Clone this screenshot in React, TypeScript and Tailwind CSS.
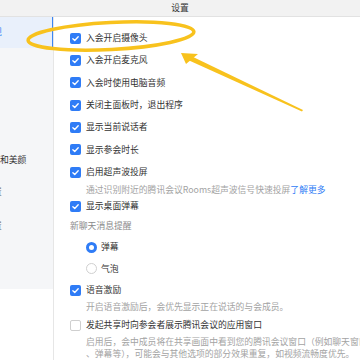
import type { ReactNode } from 'react';

const font = { fontFamily: '"Noto Sans CJK SC", "Noto Sans", sans-serif' };

function Box({ checked }: { checked: boolean }) {
  if (!checked) {
    return (
      <span className="w-[11px] h-[11px] shrink-0 rounded-[2px] border border-[#cfcfcf] bg-white" />
    );
  }
  return (
    <span className="w-[11px] h-[11px] shrink-0 rounded-[2px] bg-[#2f7cf6] flex items-center justify-center">
      <svg width="9" height="9" viewBox="0 0 12 12">
        <polyline
          points="2.5,6.2 5,8.6 9.6,3.6"
          fill="none"
          stroke="white"
          strokeWidth="1.8"
          strokeLinecap="round"
          strokeLinejoin="round"
        />
      </svg>
    </span>
  );
}

function Row({
  label,
  checked = true,
  h,
}: {
  label: string;
  checked?: boolean;
  h: string;
}) {
  return (
    <div className={`flex items-center gap-[5px] ${h}`}>
      <Box checked={checked} />
      <span className="text-[#333] whitespace-nowrap">{label}</span>
    </div>
  );
}

function Desc({ children, h }: { children: ReactNode; h: string }) {
  return (
    <div className={`pl-[16px] flex items-center text-[#a3a3a3] whitespace-nowrap ${h}`}>
      {children}
    </div>
  );
}

function Radio({ label, on, h }: { label: string; on: boolean; h: string }) {
  return (
    <div className={`pl-[16px] flex items-center gap-[4px] ${h}`}>
      {on ? (
        <span className="w-[11px] h-[11px] rounded-full border-[3px] border-[#2f7cf6] bg-white" />
      ) : (
        <span className="w-[11px] h-[11px] rounded-full border border-[#d0d0d0] bg-white" />
      )}
      <span className="text-[#333]">{label}</span>
    </div>
  );
}

export default function App() {
  return (
    <div
      className="relative w-[360px] h-[360px] overflow-hidden bg-white text-[8.8px] leading-none"
      style={font}
    >
      <div className="h-[17px] bg-[#f2f2f2] border-b border-[#e2e2e2] flex items-center justify-center text-[#333]">
        设置
      </div>
      <div className="flex h-[343px]">
        <div className="w-[54px] shrink-0 bg-[#f5f6f8] border-r border-[#e6e6e6] overflow-hidden flex flex-col">
          <div className="h-[31px] bg-[#e9f0fb] border-r-[2px] border-[#3a86f5] -mr-px flex items-center text-[#2f7cf6] whitespace-nowrap">
            <span className="-ml-[7px]">规</span>
          </div>
          <div className="h-[32px]" />
          <div className="h-[32px]" />
          <div className="h-[32px]" />
          <div className="h-[32px] flex items-center text-[#333] whitespace-nowrap">
            <span>和美颜</span>
          </div>
          <div className="h-[32px] flex items-center text-[#777] whitespace-nowrap">
            <span className="-ml-[7px]">置</span>
          </div>
          <div className="h-[36px] flex items-center text-[#777] whitespace-nowrap">
            <span className="-ml-[7px]">置</span>
          </div>
          <div className="h-[45px]" />
          <div className="flex-1 bg-white" />
        </div>
        <div className="flex-1 pl-[16px] pt-[10px] flex flex-col">
          <Row label="入会开启摄像头" h="h-[22.5px]" />
          <Row label="入会开启麦克风" h="h-[22.5px]" />
          <Row label="入会时使用电脑音频" h="h-[22.5px]" />
          <Row label="关闭主面板时，退出程序" h="h-[22.5px]" />
          <Row label="显示当前说话者" h="h-[22.5px]" />
          <Row label="显示参会时长" h="h-[22.5px]" />
          <Row label="启用超声波投屏" h="h-[22.5px]" />
          <Desc h="h-[13.5px]">
            通过识别附近的腾讯会议Rooms超声波信号快速投屏
            <span className="text-[#2f7cf6]">了解更多</span>
          </Desc>
          <Row label="显示桌面弹幕" h="h-[20px]" />
          <div className="h-[20px] flex items-center text-[#8a8a8a]">新聊天消息提醒</div>
          <Radio label="弹幕" on h="h-[21px]" />
          <Radio label="气泡" on={false} h="h-[23px]" />
          <Row label="语音激励" h="h-[20px]" />
          <Desc h="h-[14px]">开启语音激励后，会优先显示正在说话的与会成员。</Desc>
          <Row label="发起共享时向参会者展示腾讯会议的应用窗口" checked={false} h="h-[22px]" />
          <Desc h="h-[12px]">启用后，会中成员将在共享画面中看到您的腾讯会议窗口（例如聊天窗口</Desc>
          <Desc h="h-[12px]">、弹幕等），可能会与其他选项的部分效果重复，如视频流畅度优先。</Desc>
        </div>
      </div>

      <svg
        className="absolute inset-0 pointer-events-none"
        width="360"
        height="360"
        viewBox="0 0 360 360"
      >
        <ellipse
          cx="111"
          cy="36"
          rx="83"
          ry="13.5"
          transform="rotate(-3 111 36)"
          fill="none"
          stroke="#f8c21d"
          strokeWidth="3.5"
        />
        <polygon points="303,110 190,55.5 188,60 302,111.5" fill="#f8c21d" />
        <polygon points="181,53 198,54 186,64" fill="#f8c21d" />
      </svg>
    </div>
  );
}
